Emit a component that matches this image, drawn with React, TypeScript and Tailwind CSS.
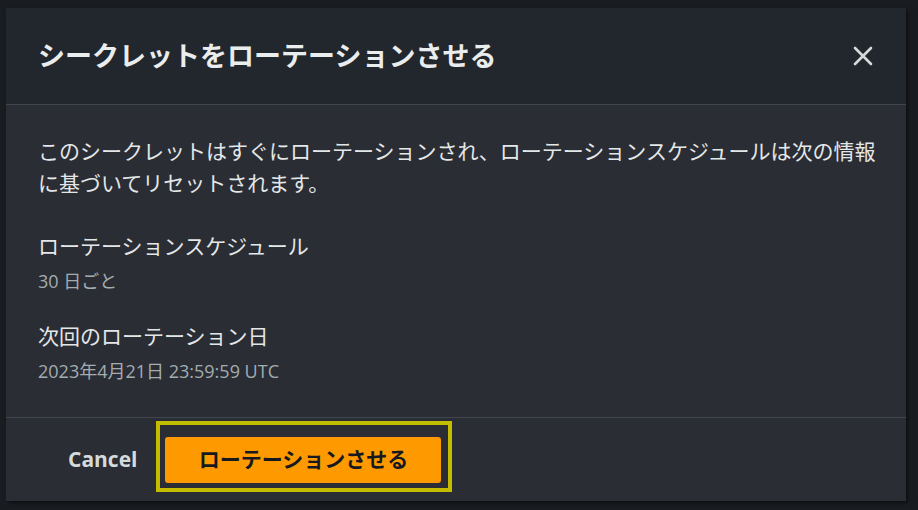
import React from "react";

export default function App() {
  const font = { fontFamily: '"Open Sans", "Noto Sans CJK JP", sans-serif' };
  return (
    <div className="w-[918px] h-[510px] bg-[#191c21] pt-[8px] pl-[6px] overflow-hidden" style={font}>
      <div className="w-[900px] h-[493px] flex flex-col bg-[#2a2d34] shadow-[2px_2px_4px_rgba(0,0,0,0.5)]">
        <div className="h-[97px] shrink-0 bg-[#22262d] border-b border-[#414750] flex items-center justify-between pl-[32px] pr-[33px]">
          <h1 className="text-[27px] leading-[36px] font-bold text-[#eaedee]">シークレットをローテーションさせる</h1>
          <svg width="20" height="20" viewBox="0 0 20 20" className="text-[#d5dbdb]">
            <path d="M2 2 L18 18 M18 2 L2 18" stroke="currentColor" strokeWidth="2.6" strokeLinecap="round" />
          </svg>
        </div>
        <div className="flex-1 pl-[32px] pr-[24px] pt-[31px] border-b border-[#414750]">
          <p className="text-[21px] leading-[31.5px] text-[#e4e7e8]">
            このシークレットはすぐにローテーションされ、ローテーションスケジュールは次の情報に基づいてリセットされます。
          </p>
          <div className="mt-[32px] text-[21px] leading-[31.5px] text-[#e4e7e8]">ローテーションスケジュール</div>
          <div className="mt-[5px] text-[18px] leading-[27px] text-[#a3acb0]">30 日ごと</div>
          <div className="mt-[26px] text-[21px] leading-[31.5px] text-[#e4e7e8]">次回のローテーション日</div>
          <div className="mt-[6px] text-[18px] leading-[27px] text-[#a3acb0]">2023年4月21日 23:59:59 UTC</div>
        </div>
        <div className="h-[83px] shrink-0 flex items-center pl-[56px]">
          <button className="text-[21px] font-bold text-[#d5dbdb] px-[6px]">Cancel</button>
          <div className="ml-[13px] mb-[7px] border-[4px] border-[#c4bc00] pt-[12px] pb-[5px] pl-[5px] pr-[7px]">
            <button className="w-[276px] h-[46px] rounded-[3px] bg-[#ff9900] text-[21px] font-bold text-[#16191f] flex items-center justify-center">
              ローテーションさせる
            </button>
          </div>
        </div>
      </div>
    </div>
  );
}
